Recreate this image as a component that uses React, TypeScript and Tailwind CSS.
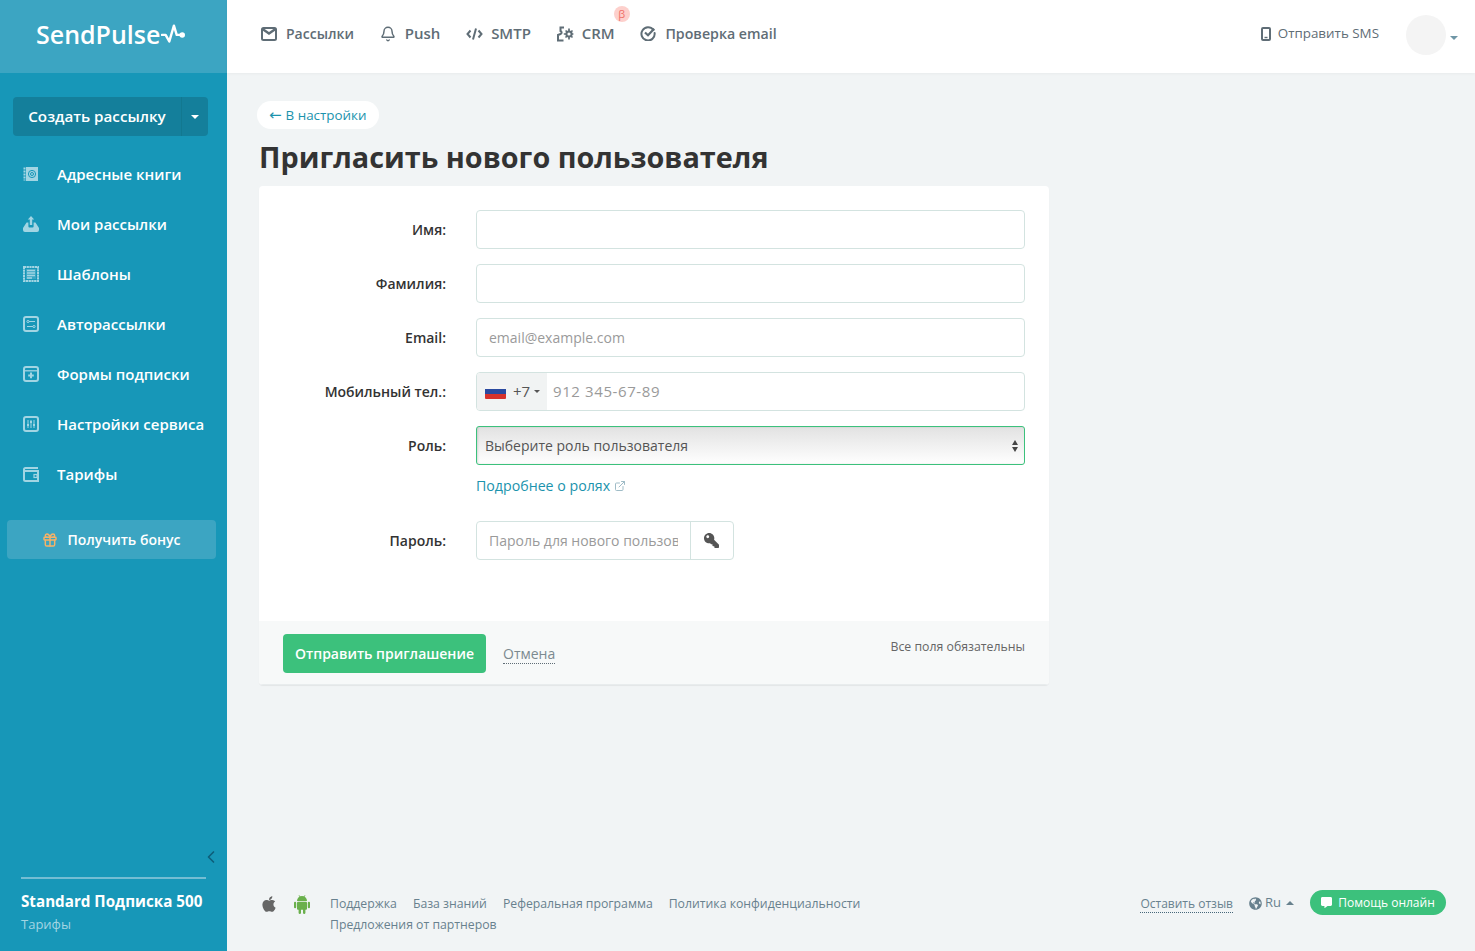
import { ExternalLink, Bell, ChevronLeft, Gift } from "lucide-react";
import { FaApple, FaKey, FaGlobeAmericas, FaCommentAlt } from "react-icons/fa";

const font = "font-['Open_Sans','Noto_Sans',sans-serif]";

function Caret({ className }: { className: string }) {
  return <span className={`inline-block w-0 h-0 border-x-[4px] border-x-transparent ${className}`} />;
}

function BookIcon() {
  return (
    <svg width="16" height="16" viewBox="0 0 16 16" fill="none">
      <rect x="3" y="1" width="12" height="14" fill="#a2d5e3" />
      <path d="M1.5 1.5v13" stroke="#a2d5e3" strokeWidth="2" strokeDasharray="2 1" />
      <circle cx="9" cy="8" r="3.6" stroke="#1797b8" strokeWidth="1" />
      <circle cx="9" cy="8" r="1.5" stroke="#1797b8" strokeWidth="1" />
    </svg>
  );
}

function SendIcon() {
  return (
    <svg width="16" height="16" viewBox="0 0 16 16" fill="#a2d5e3">
      <path d="M8 0l3.2 3.4H9.2V9H6.8V3.4H4.8z" />
      <path d="M3.6 6.6H5.4V10.4a1 1 0 001 1h3.2a1 1 0 001-1V6.6h1.8L16 12v2a2 2 0 01-2 2H2a2 2 0 01-2-2v-2z" />
    </svg>
  );
}

function TemplateIcon() {
  return (
    <svg width="16" height="16" viewBox="0 0 16 16" fill="none">
      <rect x="1" y="1" width="14" height="14" stroke="#a2d5e3" strokeWidth="2" strokeDasharray="2.2 0.5" />
      <rect x="3" y="3" width="10" height="10" fill="#a2d5e3" fillOpacity="0.25" />
      <path d="M4 4.5h8M4 7h8M4 9.5h8M4 12h5" stroke="#a2d5e3" strokeWidth="1.3" />
    </svg>
  );
}

function AutoIcon() {
  return (
    <svg width="16" height="16" viewBox="0 0 16 16" fill="none" stroke="#a2d5e3">
      <rect x="1" y="1" width="14" height="14" rx="2" strokeWidth="2" />
      <path d="M4 5.5h8M4 10.5h8" strokeWidth="1" />
      <circle cx="5" cy="5.5" r="1.1" fill="#1797b8" strokeWidth="1" />
      <circle cx="11" cy="10.5" r="1.1" fill="#1797b8" strokeWidth="1" />
    </svg>
  );
}

function FormIcon() {
  return (
    <svg width="16" height="16" viewBox="0 0 16 16" fill="none" stroke="#a2d5e3">
      <rect x="1" y="1" width="14" height="14" rx="2" strokeWidth="2" />
      <path d="M1 4.8h14" strokeWidth="1.3" />
      <path d="M8 6.6v5.6M5.2 9.4h5.6" strokeWidth="2" />
    </svg>
  );
}

function SlidersIcon() {
  return (
    <svg width="16" height="16" viewBox="0 0 16 16" fill="none" stroke="#a2d5e3">
      <rect x="1" y="1" width="14" height="14" rx="2" strokeWidth="2" />
      <path d="M5 4v8M8 4v8M11 4v8" strokeWidth="1" />
      <path d="M4 9h2M7 6h2M10 9h2" strokeWidth="2" />
    </svg>
  );
}

function WalletIcon() {
  return (
    <svg width="16" height="16" viewBox="0 0 16 16" fill="none" stroke="#a2d5e3">
      <path d="M15 2H2.5A1.5 1.5 0 001 3.5v10A1.5 1.5 0 002.5 15H15V5H1" strokeWidth="2" />
      <rect x="11" y="8.5" width="3" height="3" strokeWidth="1.2" />
    </svg>
  );
}

function MailIcon() {
  return (
    <svg width="16" height="14" viewBox="0 0 16 14" fill="none" stroke="currentColor" strokeWidth="2">
      <rect x="1" y="1" width="14" height="12" rx="1.5" />
      <path d="M1.5 2l6.5 4.5L14.5 2" strokeWidth="2.4" />
    </svg>
  );
}

function CodeIcon() {
  return (
    <svg width="17" height="14" viewBox="0 0 17 14" fill="none" stroke="currentColor" strokeWidth="2">
      <path d="M4.5 3.5L1.5 7l3 3.5M12.5 3.5l3 3.5-3 3.5M10 1.5L7 12.5" />
    </svg>
  );
}

function CrmIcon() {
  return (
    <svg width="17" height="16" viewBox="0 0 17 16" fill="none" stroke="currentColor" strokeWidth="2">
      <path d="M7 1.5H3.5V5c1.5.6 1.5 2.5 0 3L1 9v5.5h5.5" />
      <circle cx="12" cy="8" r="2.6" />
      <path d="M12 2.5v2.4M12 11v2.4M6.8 8h2.4M14.8 8h1.6M8.6 4.5l1.5 1.5M14 10l1.5 1.5M15.5 4.5L14 6M10 10l-1.5 1.5" strokeWidth="1.7" />
    </svg>
  );
}

function CheckIcon() {
  return (
    <svg width="16" height="16" viewBox="0 0 16 16" fill="none" stroke="currentColor" strokeWidth="2">
      <path d="M13.4 5A6.6 6.6 0 1014.6 8" strokeLinecap="round" />
      <path d="M5 7.5l3 2.8 6.2-6.6" strokeWidth="2.2" />
    </svg>
  );
}

function AndroidIcon() {
  return (
    <svg width="16" height="20" viewBox="0 0 16 20" fill="#6ab04c">
      <path d="M3 7a5 5 0 0110 0z" />
      <path d="M5 1.2L6.2 3.4M11 1.2L9.8 3.4" stroke="#6ab04c" strokeWidth="0.8" />
      <rect x="3" y="7.8" width="10" height="8" rx="1" />
      <rect x="0" y="7.8" width="2.2" height="6.5" rx="1.1" />
      <rect x="13.8" y="7.8" width="2.2" height="6.5" rx="1.1" />
      <rect x="4.6" y="14" width="2.4" height="6" rx="1.2" />
      <rect x="9" y="14" width="2.4" height="6" rx="1.2" />
    </svg>
  );
}

const menu = [
  { label: "Адресные книги", icon: <BookIcon /> },
  { label: "Мои рассылки", icon: <SendIcon /> },
  { label: "Шаблоны", icon: <TemplateIcon /> },
  { label: "Авторассылки", icon: <AutoIcon /> },
  { label: "Формы подписки", icon: <FormIcon /> },
  { label: "Настройки сервиса", icon: <SlidersIcon /> },
  { label: "Тарифы", icon: <WalletIcon /> },
];

function Sidebar() {
  return (
    <aside className="w-[227px] shrink-0 h-full bg-[#1797b8] flex flex-col">
      <div className="h-[73px] bg-[#3ca5c2] flex items-center pl-[36px] pb-[5px] gap-[1px]">
        <span className="text-white text-[25px] font-semibold leading-none">SendPulse</span>
        <svg width="24" height="24" viewBox="0 0 26 24" fill="none" stroke="white" strokeWidth="2.6" strokeLinejoin="round" strokeLinecap="round">
          <path d="M1 13h4l4 7 5-17 3 10h5" />
          <circle cx="23" cy="13" r="1.7" fill="white" />
        </svg>
      </div>

      <div className="mt-6 ml-[13px] mr-[19px] h-[39px] flex rounded bg-[#147f9b] text-white">
        <div className="flex-1 flex items-center justify-center text-[15.2px] font-semibold border-r border-[#127890]">Создать рассылку</div>
        <div className="w-[26px] flex items-center justify-center">
          <Caret className="border-t-[4px] border-t-white" />
        </div>
      </div>

      <nav className="mt-[13px]">
        {menu.map((m) => (
          <div key={m.label} className="h-[50px] flex items-center pl-[23px] gap-[18px] text-white text-[15px] font-semibold">
            {m.icon}
            <span>{m.label}</span>
          </div>
        ))}
      </nav>

      <div className="mt-[21px] ml-[7px] mr-[11px] h-[39px] rounded bg-[#3ca5c2] flex items-center justify-center gap-[9px] text-white text-[14px] font-semibold">
        <Gift size={16} strokeWidth={2.2} className="text-[#f7b267]" />
        Получить бонус
      </div>

      <div className="mt-auto flex justify-end pr-[6px]">
        <ChevronLeft size={20} strokeWidth={2} className="text-[#0e5f7a]" />
      </div>
      <div className="mx-[21px] mt-[10px] border-t-2 border-[#74bdd3]" />
      <div className="px-[21px] pt-[11px] pb-[18px]">
        <div className="text-white text-[15.2px] font-bold leading-[22px] whitespace-nowrap">Standard Подписка 500</div>
        <div className="text-[#a2d5e3] text-[13px] mt-[3px] leading-[18px]">Тарифы</div>
      </div>
    </aside>
  );
}

const topNav = [
  { label: "Рассылки", icon: <MailIcon />, cls: "text-[14px]" },
  { label: "Push", icon: <Bell size={16} strokeWidth={2.2} />, cls: "text-[15px]" },
  { label: "SMTP", icon: <CodeIcon />, cls: "text-[15px]" },
  { label: "CRM", icon: <CrmIcon />, cls: "text-[15px]", beta: true },
  { label: "Проверка email", icon: <CheckIcon />, cls: "text-[14.2px]" },
];

function Header() {
  return (
    <header className="h-[73px] shrink-0 bg-white flex items-center pl-[34px] pr-[17px] shadow-[0_1px_3px_rgba(0,0,0,0.04)] relative">
      <div className="flex items-center gap-[25.8px] -mt-[6px]">
        {topNav.map((t) => (
          <div key={t.label} className={`relative flex items-center gap-[8px] text-[#5f6d76] font-semibold ${t.cls}`}>
            <span className="w-[17px] flex justify-start">{t.icon}</span>
            <span>{t.label}</span>
            {t.beta && (
              <span className="absolute -top-[16px] right-[-15px] w-4 h-4 rounded-full bg-[#fdd0cc] text-[#f0736a] text-[11px] leading-4 text-center font-normal">β</span>
            )}
          </div>
        ))}
      </div>
      <div className="ml-auto flex items-center text-[#5f6d76] text-[13.4px] -mt-[6px]">
        <svg width="10" height="14" viewBox="0 0 10 14" fill="none" stroke="#5f6d76" strokeWidth="2" className="mr-[7px]">
          <rect x="1" y="1" width="8" height="12" rx="1" />
          <path d="M3.5 10.5h3" strokeWidth="1.4" />
        </svg>
        Отправить SMS
        <div className="w-10 h-10 rounded-full bg-[#f4f4f4] ml-[27px] mt-[2px]" />
        <Caret className="ml-[4px] mt-[8px] border-t-[4px] border-t-[#6f96a6]" />
      </div>
    </header>
  );
}

const inputCls =
  "w-full h-full px-3 text-[14px] text-[#333] bg-transparent outline-none placeholder:text-[#9a9a9a]";

function Row({ label, children }: { label: string; children: React.ReactNode }) {
  return (
    <div className="flex items-center h-[39px]">
      <label className="w-[187px] text-right text-[14px] font-semibold text-[#333] whitespace-nowrap">{label}</label>
      <div className="ml-[30px] w-[549px] h-full">{children}</div>
    </div>
  );
}

function InviteForm() {
  const box = "h-full border border-[#d3e3e0] rounded";
  return (
    <div className="w-[790px] bg-white rounded shadow-[0_1px_1px_rgba(0,0,0,0.06)] overflow-hidden">
      <div className="pt-[24px] h-[435px] pl-0 flex flex-col gap-[15px]">
        <Row label="Имя:"><div className={box}><input className={inputCls} /></div></Row>
        <Row label="Фамилия:"><div className={box}><input className={inputCls} /></div></Row>
        <Row label="Email:"><div className={box}><input className={inputCls} placeholder="email@example.com" /></div></Row>
        <Row label="Мобильный тел.:">
          <div className={`${box} flex overflow-hidden`}>
            <div className="w-[70px] shrink-0 bg-[#f1f3f3] flex items-center pl-[8px] text-[#555] text-[15px]">
              <span className="w-[21px] h-[14px] flex flex-col rounded-[1px] overflow-hidden mr-[7px]">
                <span className="flex-1 bg-[#f5f5f5]" />
                <span className="flex-1 bg-[#2a4aa0]" />
                <span className="flex-1 bg-[#d6322c]" />
              </span>
              +7
              <Caret className="ml-[4px] border-t-[3px] border-t-[#555] !border-x-[3px]" />
            </div>
            <input className={`${inputCls} !px-[6px] !pb-[2px] !text-[15px] tracking-[0.6px]`} placeholder="912 345-67-89" />
          </div>
        </Row>
        <Row label="Роль:">
          <div className="h-full border border-[#3cc17c] rounded-[3px] flex items-center justify-between pl-[8px] pr-[6px] text-[14px] text-[#555] bg-gradient-to-b from-[#e2e2e2] to-white shadow-[inset_1px_0_2px_rgba(0,0,0,0.12)]">
            Выберите роль пользователя
            <span className="flex flex-col gap-[2px]">
              <Caret className="!border-x-[3.5px] border-b-[5px] border-b-[#444]" />
              <Caret className="!border-x-[3.5px] border-t-[5px] border-t-[#444]" />
            </span>
          </div>
        </Row>
        <div className="pl-[217px] -mt-[4px] h-[20px] flex items-center gap-[4px] text-[14.2px] text-[#1b93ad]">
          Подробнее о ролях
          <ExternalLink size={12} className="text-[#9fbcc7]" />
        </div>
        <div className="mt-[10px]">
          <Row label="Пароль:">
            <div className={`${box} flex w-[258px]`}>
              <input className={`${inputCls} min-w-0 flex-1`} placeholder="Пароль для нового пользователя" />
              <div className="w-[43px] shrink-0 border-l border-[#d3e3e0] flex items-center justify-center">
                <FaKey className="text-[#555] text-[15px] -scale-x-100 -ml-[2px]" />
              </div>
            </div>
          </Row>
        </div>
      </div>
      <div className="h-[64px] bg-[#f7f9f9] border-b border-[#e8eced] pl-6 pr-6 pt-[13px] flex items-start">
        <button className="w-[203px] h-[39px] rounded bg-[#3cc17c] text-white text-[14px] font-semibold">Отправить приглашение</button>
        <span className="ml-[17px] mt-[11px] text-[14px] leading-[18px] text-[#7c8a90] border-b border-dotted border-[#5f6d76]">Отмена</span>
        <span className="ml-auto mt-[4px] text-[12.3px] text-[#666]">Все поля обязательны</span>
      </div>
    </div>
  );
}

function Footer() {
  return (
    <footer className="mt-auto pl-[33px] pr-[29px] pb-[16px] flex items-start text-[12.25px] text-[#68818e]">
      <div className="flex items-center gap-[16px] pt-[1px]">
        <FaApple className="text-[#666] text-[18px]" />
        <AndroidIcon />
      </div>
      <div className="ml-[20px] leading-[21px]">
        <div className="flex gap-[16px] whitespace-nowrap">
          <span>Поддержка</span>
          <span>База знаний</span>
          <span>Реферальная программа</span>
          <span>Политика конфиденциальности</span>
        </div>
        <div>Предложения от партнеров</div>
      </div>
      <div className="ml-auto flex items-center h-[25px] -mt-[3px]">
        <span className="mt-[3px] border-b border-dotted border-[#47677a] leading-[16px] text-[12px]">Оставить отзыв</span>
        <FaGlobeAmericas className="ml-[16px] mt-[1px] text-[13px]" />
        <span className="ml-[3px] mt-[1px] text-[13px]">Ru</span>
        <Caret className="ml-[5px] border-b-[4px] border-b-[#68818e]" />
        <div className="ml-[16px] w-[136px] h-[25px] rounded-full bg-[#3cc17c] text-white text-[12px] flex items-center justify-center gap-[6px]">
          <FaCommentAlt className="text-[11px]" />
          Помощь онлайн
        </div>
      </div>
    </footer>
  );
}

export default function App() {
  return (
    <div className={`h-screen flex overflow-hidden bg-[#f1f4f5] ${font}`}>
      <Sidebar />
      <div className="flex-1 min-w-0 flex flex-col">
        <Header />
        <main className="pl-[32px] pt-[28px]">
          <span className="-ml-[2px] inline-flex items-center w-[122px] h-[28px] pl-[12px] rounded-full bg-white text-[13.4px] text-[#1b93ad]">
            <span className="font-['DejaVu_Sans',sans-serif] text-[15px] mr-[4px]">←</span>
            В настройки
          </span>
          <h1 className="mt-[8px] text-[28.8px] leading-[40px] font-bold text-[#333] whitespace-nowrap">Пригласить нового пользователя</h1>
          <div className="mt-[9px]">
            <InviteForm />
          </div>
        </main>
        <Footer />
      </div>
    </div>
  );
}
